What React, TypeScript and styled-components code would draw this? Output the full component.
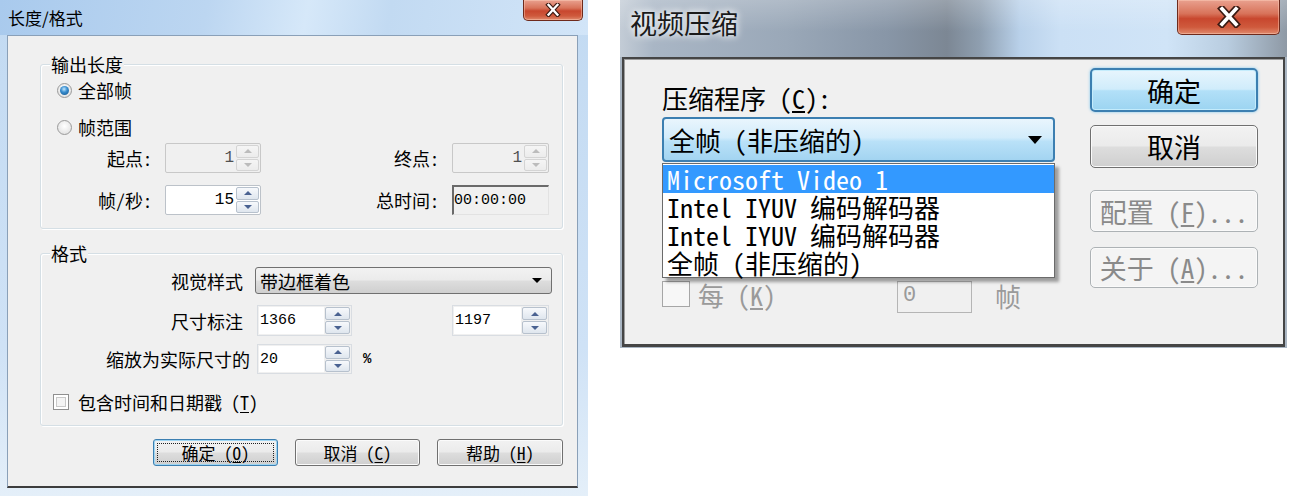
import styled, { createGlobalStyle } from "styled-components";

const cjk = `"Noto Sans Mono CJK SC", "Noto Sans CJK SC", "Liberation Mono", monospace`;
const ui = `"Noto Sans CJK SC", "Liberation Sans", sans-serif`;
const mono = `"Liberation Mono", "DejaVu Sans Mono", monospace`;

const GlobalStyle = createGlobalStyle`
  html, body { margin: 0; padding: 0; background: #ffffff; }
  body { font-family: ${cjk}; color: #000; }
  * { box-sizing: border-box; }
`;

const Page = styled.div`
  display: flex;
  align-items: flex-start;
  width: 1305px;
  height: 496px;
  overflow: hidden;
`;

const U = styled.span`
  text-decoration: underline;
  text-underline-offset: 2px;
`;

/* ---------- shared window chrome ---------- */

const CloseButton = styled.div<{ $w: number; $h: number }>`
  width: ${(p) => p.$w}px;
  height: ${(p) => p.$h}px;
  margin-left: auto;
  display: flex;
  align-items: center;
  justify-content: center;
  border: 1px solid #6e2a1c;
  border-top: none;
  border-radius: 0 0 5px 5px;
  background: linear-gradient(180deg, #e9a18f 0%, #d8735a 40%, #c8472e 55%, #cf5a3d 80%, #e08a6d 100%);
  box-shadow: inset 0 0 0 1px rgba(255, 210, 190, 0.45);
`;

function CloseGlyph({ size }: { size: number }) {
  return (
    <svg width={size} height={size * 0.8} viewBox="0 0 20 16">
      <path d="M5 2 L15 13 M15 2 L5 13" stroke="#3b1a12" strokeWidth="5" strokeLinecap="square" fill="none" />
      <path d="M5 2 L15 13 M15 2 L5 13" stroke="#ffffff" strokeWidth="2.6" strokeLinecap="square" fill="none" />
    </svg>
  );
}

const Tri = styled.span<{ $dir: "up" | "down"; $c: string; $s: number; $h?: number }>`
  width: 0;
  height: 0;
  border-left: ${(p) => p.$s}px solid transparent;
  border-right: ${(p) => p.$s}px solid transparent;
  ${(p) =>
    p.$dir === "up"
      ? `border-bottom: ${p.$h ?? p.$s}px solid ${p.$c};`
      : `border-top: ${p.$h ?? p.$s}px solid ${p.$c};`}
`;

/* ---------- left dialog: 长度/格式 ---------- */

const SmallWindow = styled.div`
  width: 588px;
  height: 496px;
  flex-shrink: 0;
  display: flex;
  flex-direction: column;
  background: linear-gradient(180deg, #c2daf2 0%, #cfe2f6 70%, #e4eff9 100%);
`;

const SmallTitleBar = styled.div`
  height: 35px;
  display: flex;
  align-items: flex-start;
  padding-right: 5px;
  background: linear-gradient(100deg, #a9caed 0%, #bcd6f1 35%, #d6e8f9 52%, #c2daf2 66%, #d2e5f8 100%);
`;

const SmallTitle = styled.span`
  font-family: ${ui};
  font-size: 17px;
  line-height: 35px;
  padding-left: 8px;
  color: #000;
`;

const SmallClient = styled.div`
  flex: 1;
  margin: 0 10px 8px 7px;
  border: 1px solid #8aa0b8;
  border-bottom: 2px solid #3d3d3d;
  background: #f0f0f0;
  padding: 28px 0 0 32px;
  font-size: 18px;
`;

const Group = styled.div<{ $h: number; $mt?: number }>`
  position: relative;
  width: 523px;
  height: ${(p) => p.$h}px;
  margin-top: ${(p) => p.$mt ?? 0}px;
  border: 1px solid #d5dfe5;
  border-radius: 3px;
  box-shadow: inset 1px 1px 0 #ffffff, 1px 1px 0 #ffffff;
`;

const Legend = styled.span`
  position: absolute;
  top: -12px;
  left: 9px;
  padding: 0 1px;
  background: #f0f0f0;
  font-size: 18px;
  line-height: 22px;
`;

const RadioRow = styled.label<{ $mt: number }>`
  display: flex;
  align-items: center;
  gap: 6px;
  height: 22px;
  margin-top: ${(p) => p.$mt}px;
  padding-left: 16px;
  line-height: 22px;
`;

const Radio = styled.span<{ $on?: boolean }>`
  position: relative;
  width: 15px;
  height: 15px;
  border-radius: 50%;
  border: 1px solid #9a9a9a;
  background: radial-gradient(circle at 50% 40%, #ffffff 0%, #e6e6e6 70%, #d2d2d2 100%);
  &::after {
    content: "";
    display: ${(p) => (p.$on ? "block" : "none")};
    position: absolute;
    inset: 2px;
    border-radius: 50%;
    background: radial-gradient(circle at 45% 35%, #c4e8ff 0%, #3a8fd0 40%, #0d4f88 100%);
  }
`;

const FieldGrid = styled.div`
  display: grid;
  grid-template-columns: 111px 96px 1fr 97px;
  grid-auto-rows: 30px;
  column-gap: 13px;
  row-gap: 12px;
  align-items: center;
  margin-top: 5px;
  padding-right: 13px;
`;

const FieldLabel = styled.span`
  text-align: right;
  line-height: 20px;
  white-space: nowrap;
`;

const SpinBox = styled.div<{ $off?: boolean }>`
  height: 30px;
  display: flex;
  padding: 1px;
  border: 1px solid ${(p) => (p.$off ? "#c8c8c8" : "#bcc2c9")};
  border-radius: 2px;
  background: ${(p) => (p.$off ? "#f0f0f0" : "#ffffff")};
`;

const SpinValue = styled.span<{ $off?: boolean }>`
  flex: 1;
  text-align: right;
  padding-right: 2px;
  font-family: ${mono};
  font-size: 16px;
  line-height: 26px;
  color: ${(p) => (p.$off ? "#505050" : "#000")};
`;

const SpinCol = styled.div<{ $w: number }>`
  width: ${(p) => p.$w}px;
  display: flex;
  flex-direction: column;
  gap: 1px;
`;

const SpinBtn = styled.span<{ $off?: boolean }>`
  flex: 1;
  display: flex;
  align-items: center;
  justify-content: center;
  border: 1px solid ${(p) => (p.$off ? "#d4d4d4" : "#b7c1cd")};
  border-radius: 2px;
  background: ${(p) =>
    p.$off ? "linear-gradient(180deg, #f5f5f5, #ececec)" : "linear-gradient(180deg, #f7f9fc, #dfe6ee)"};
`;

function Spinner({ off, w = 23 }: { off?: boolean; w?: number }) {
  const c = off ? "#bcbcbc" : "#4a6291";
  return (
    <SpinCol $w={w}>
      <SpinBtn $off={off}>
        <Tri $dir="up" $c={c} $s={4} />
      </SpinBtn>
      <SpinBtn $off={off}>
        <Tri $dir="down" $c={c} $s={4} />
      </SpinBtn>
    </SpinCol>
  );
}

const TimeBox = styled.div`
  height: 30px;
  display: flex;
  align-items: center;
  border-style: solid;
  border-width: 2px 1px 1px 2px;
  border-color: #6a6a6a #e2e2e2 #e2e2e2 #6a6a6a;
  background: #f0f0f0;
  font-family: ${mono};
  font-size: 15px;
`;

const Row = styled.div<{ $h: number; $mt: number }>`
  display: flex;
  align-items: center;
  height: ${(p) => p.$h}px;
  margin-top: ${(p) => p.$mt}px;
`;

const RowLabel = styled.span<{ $w: number; $gap: number }>`
  width: ${(p) => p.$w}px;
  margin-right: ${(p) => p.$gap}px;
  flex-shrink: 0;
  text-align: right;
  white-space: nowrap;
  line-height: 20px;
`;

const StyleCombo = styled.div`
  width: 297px;
  height: 27px;
  display: flex;
  align-items: center;
  justify-content: space-between;
  padding: 0 9px 0 4px;
  border: 1px solid #707070;
  border-radius: 3px;
  background: linear-gradient(180deg, #f2f2f2 0%, #ebebeb 48%, #dddddd 52%, #cfcfcf 100%);
`;

const NumField = styled.div<{ $w: number; $ml?: number }>`
  width: ${(p) => p.$w}px;
  height: 100%;
  margin-left: ${(p) => p.$ml ?? 0}px;
  display: flex;
  gap: 1px;
  padding: 1px;
  border: 1px solid #d9dde2;
  background: #f0f0f0;
`;

const NumEdit = styled.span`
  flex: 1;
  background: #ffffff;
  font-family: ${mono};
  font-size: 15px;
  line-height: 27px;
  padding-left: 1px;
`;

const Percent = styled.span`
  margin-left: 11px;
  font-family: ${mono};
  font-size: 14px;
  font-weight: bold;
`;

const CheckRow = styled.label`
  display: flex;
  align-items: center;
  gap: 9px;
  height: 22px;
  margin-top: 17px;
  padding-left: 12px;
`;

const CheckBox = styled.span`
  width: 16px;
  height: 16px;
  border: 1px solid #8f8f8f;
  background: #f4f4f4;
  box-shadow: inset 0 0 0 2px #ffffff, inset 0 0 0 3px #c9c9c9;
`;

const ButtonRow = styled.div`
  width: 523px;
  display: flex;
  justify-content: flex-end;
  gap: 17px;
  margin-top: 13px;
`;

const SmallButton = styled.button<{ $w: number; $default?: boolean }>`
  position: relative;
  width: ${(p) => p.$w}px;
  height: 27px;
  margin: 0;
  padding: 0;
  font-family: ${cjk};
  font-size: 17px;
  color: #000;
  border: 1px solid ${(p) => (p.$default ? "#3c7fb1" : "#707070")};
  border-radius: 3px;
  background: linear-gradient(180deg, #f2f2f2 0%, #ebebeb 48%, #dddddd 52%, #cfcfcf 100%);
  box-shadow: ${(p) => (p.$default ? "inset 0 0 0 1px #9fd6f3" : "inset 0 0 0 1px #fbfbfb")};
  &::after {
    content: "";
    display: ${(p) => (p.$default ? "block" : "none")};
    position: absolute;
    inset: 3px;
    border: 1px dotted #202020;
  }
`;

/* ---------- right dialog: 视频压缩 ---------- */

const BigWindow = styled.div`
  width: 667px;
  height: 348px;
  margin-left: 32px;
  flex-shrink: 0;
  display: flex;
  flex-direction: column;
  background: #aab6c3;
`;

const BigTitleBar = styled.div`
  height: 57px;
  flex-shrink: 0;
  display: flex;
  align-items: flex-start;
  padding-right: 7px;
  background: linear-gradient(180deg, rgba(255, 255, 255, 0.22) 0%, rgba(255, 255, 255, 0) 55%),
    linear-gradient(90deg, #c3ccd6 0%, #a9b6c5 5%, #9aa8b8 25%, #8896a7 40%, #7c8794 49%, #8f9fb0 54%,
      #b9d1ea 60%, #cbe0f5 66%, #d0e4f7 82%, #b9cde0 91%, #8e99a5 100%);
`;

const BigTitle = styled.span`
  font-family: ${ui};
  font-size: 27px;
  line-height: 46px;
  padding-left: 10px;
  color: #1a1a1a;
  text-shadow: 0 0 6px #ffffff, 0 0 10px rgba(255, 255, 255, 0.8);
`;

const BigClient = styled.div`
  flex: 1;
  margin: 0 2px 1px 2px;
  border: 2px solid #454545;
  border-bottom-width: 3px;
  box-shadow: inset 1px 1px 0 #9d9d9d;
  background: #f0f0f0;
  display: grid;
  grid-template-columns: 393px 168px;
  column-gap: 35px;
  align-items: start;
  padding: 9px 0 0 38px;
`;

const LeftCol = styled.div`
  display: flex;
  flex-direction: column;
`;

const CodecLabel = styled.span`
  font-size: 26px;
  line-height: 34px;
  margin-top: 13px;
`;

const ComboWrap = styled.div`
  position: relative;
  margin-top: 2px;
`;

const CodecCombo = styled.div`
  height: 45px;
  display: flex;
  align-items: center;
  justify-content: space-between;
  padding: 0 11px 0 5px;
  border: 2px solid #3c7fb1;
  border-radius: 4px;
  background: linear-gradient(180deg, #e9f5fd 0%, #d3ecfb 45%, #b9e1f8 55%, #a3d4f1 100%);
  font-size: 26px;
`;

const CodecList = styled.ul`
  position: absolute;
  top: calc(100% + 1px);
  left: 0;
  width: 393px;
  margin: 0;
  padding: 1px 0 0;
  list-style: none;
  background: #ffffff;
  border: 1px solid #6b6b6b;
  box-shadow: 4px 4px 3px rgba(0, 0, 0, 0.35);
  z-index: 2;
`;

const CodecItem = styled.li<{ $on?: boolean }>`
  height: 28px;
  padding-left: 4px;
  font-size: 26px;
  line-height: 28px;
  white-space: nowrap;
  color: ${(p) => (p.$on ? "#ffffff" : "#000000")};
  background: ${(p) => (p.$on ? "#3399ff" : "transparent")};
`;

const KeyRow = styled.div`
  display: flex;
  align-items: flex-start;
  margin-top: 119px;
  color: #9a9a9a;
`;

const BigCheck = styled.span`
  width: 28px;
  height: 26px;
  border: 1px solid #a6a6a6;
  background: #f7f7f7;
`;

const KeyText = styled.span`
  width: 199px;
  margin-left: 8px;
  font-size: 26px;
  line-height: 28px;
`;

const ZeroBox = styled.span`
  width: 75px;
  height: 32px;
  border: 1px solid #b5b5b5;
  background: #f0f0f0;
  padding-left: 5px;
  font-family: ${mono};
  font-size: 22px;
  line-height: 28px;
`;

const FrameText = styled.span`
  margin-left: 23px;
  font-size: 26px;
  line-height: 30px;
`;

const RightCol = styled.div`
  display: flex;
  flex-direction: column;
`;

const BigButton = styled.button<{ $h: number; $mt: number; $default?: boolean; $off?: boolean }>`
  height: ${(p) => p.$h}px;
  margin: ${(p) => p.$mt}px 0 0 0;
  padding: 0;
  font-family: ${cjk};
  font-size: 27px;
  line-height: 1;
  color: ${(p) => (p.$off ? "#8a8a8a" : "#000")};
  border: ${(p) => (p.$default ? "2px solid #3c7fb1" : p.$off ? "1px solid #adb2b5" : "1px solid #707070")};
  border-radius: 5px;
  background: ${(p) =>
    p.$default
      ? "linear-gradient(180deg, #e7f5fd 0%, #d0ecfb 48%, #b2e0f8 52%, #9cd4f1 100%)"
      : p.$off
      ? "#f4f4f4"
      : "linear-gradient(180deg, #f2f2f2 0%, #ebebeb 48%, #dddddd 52%, #cfcfcf 100%)"};
  box-shadow: ${(p) => (p.$default ? "0 0 3px #7cc6ee, inset 0 0 0 1px #c4ecfc" : "inset 0 0 0 1px #fafafa")};
`;

export default function App() {
  return (
    <Page>
      <GlobalStyle />

      <SmallWindow>
        <SmallTitleBar>
          <SmallTitle>长度/格式</SmallTitle>
          <CloseButton $w={60} $h={21}>
            <CloseGlyph size={18} />
          </CloseButton>
        </SmallTitleBar>
        <SmallClient>
          <Group $h={165}>
            <Legend>输出长度</Legend>
            <RadioRow $mt={14}>
              <Radio $on />
              全部帧
            </RadioRow>
            <RadioRow $mt={15}>
              <Radio />
              帧范围
            </RadioRow>
            <FieldGrid>
              <FieldLabel>起点:</FieldLabel>
              <SpinBox $off>
                <SpinValue $off>1</SpinValue>
                <Spinner off />
              </SpinBox>
              <FieldLabel>终点:</FieldLabel>
              <SpinBox $off>
                <SpinValue $off>1</SpinValue>
                <Spinner off />
              </SpinBox>
              <FieldLabel>帧/秒:</FieldLabel>
              <SpinBox>
                <SpinValue>15</SpinValue>
                <Spinner />
              </SpinBox>
              <FieldLabel>总时间:</FieldLabel>
              <TimeBox>00:00:00</TimeBox>
            </FieldGrid>
          </Group>

          <Group $h={173} $mt={24}>
            <Legend>格式</Legend>
            <Row $h={27} $mt={13}>
              <RowLabel $w={202} $gap={12}>视觉样式</RowLabel>
              <StyleCombo>
                带边框着色
                <Tri $dir="down" $c="#000" $s={5} $h={5} />
              </StyleCombo>
            </Row>
            <Row $h={31} $mt={11}>
              <RowLabel $w={202} $gap={14}>尺寸标注</RowLabel>
              <NumField $w={95}>
                <NumEdit>1366</NumEdit>
                <Spinner w={25} />
              </NumField>
              <NumField $w={97} $ml={100}>
                <NumEdit>1197</NumEdit>
                <Spinner w={25} />
              </NumField>
            </Row>
            <Row $h={30} $mt={8}>
              <RowLabel $w={209} $gap={7}>缩放为实际尺寸的</RowLabel>
              <NumField $w={95}>
                <NumEdit>20</NumEdit>
                <Spinner w={25} />
              </NumField>
              <Percent>%</Percent>
            </Row>
            <CheckRow>
              <CheckBox />
              <span>
                包含时间和日期戳 (<U>T</U>)
              </span>
            </CheckRow>
          </Group>

          <ButtonRow>
            <SmallButton $w={125} $default>
              确定 (<U>O</U>)
            </SmallButton>
            <SmallButton $w={125}>
              取消 (<U>C</U>)
            </SmallButton>
            <SmallButton $w={126}>
              帮助 (<U>H</U>)
            </SmallButton>
          </ButtonRow>
        </SmallClient>
      </SmallWindow>

      <BigWindow>
        <BigTitleBar>
          <BigTitle>视频压缩</BigTitle>
          <CloseButton $w={103} $h={35}>
            <CloseGlyph size={28} />
          </CloseButton>
        </BigTitleBar>
        <BigClient>
          <LeftCol>
            <CodecLabel>
              压缩程序 (<U>C</U>):
            </CodecLabel>
            <ComboWrap>
              <CodecCombo>
                全帧 (非压缩的)
                <Tri $dir="down" $c="#000" $s={7} $h={8} />
              </CodecCombo>
              <CodecList>
                <CodecItem $on>Microsoft Video 1</CodecItem>
                <CodecItem>Intel IYUV 编码解码器</CodecItem>
                <CodecItem>Intel IYUV 编码解码器</CodecItem>
                <CodecItem>全帧 (非压缩的)</CodecItem>
              </CodecList>
            </ComboWrap>
            <KeyRow>
              <BigCheck />
              <KeyText>
                每 (<U>K</U>)
              </KeyText>
              <ZeroBox>0</ZeroBox>
              <FrameText>帧</FrameText>
            </KeyRow>
          </LeftCol>

          <RightCol>
            <BigButton $h={44} $mt={0} $default>
              确定
            </BigButton>
            <BigButton $h={43} $mt={13}>
              取消
            </BigButton>
            <BigButton $h={42} $mt={22} $off>
              配置 (<U>F</U>)...
            </BigButton>
            <BigButton $h={41} $mt={15} $off>
              关于 (<U>A</U>)...
            </BigButton>
          </RightCol>
        </BigClient>
      </BigWindow>
    </Page>
  );
}
